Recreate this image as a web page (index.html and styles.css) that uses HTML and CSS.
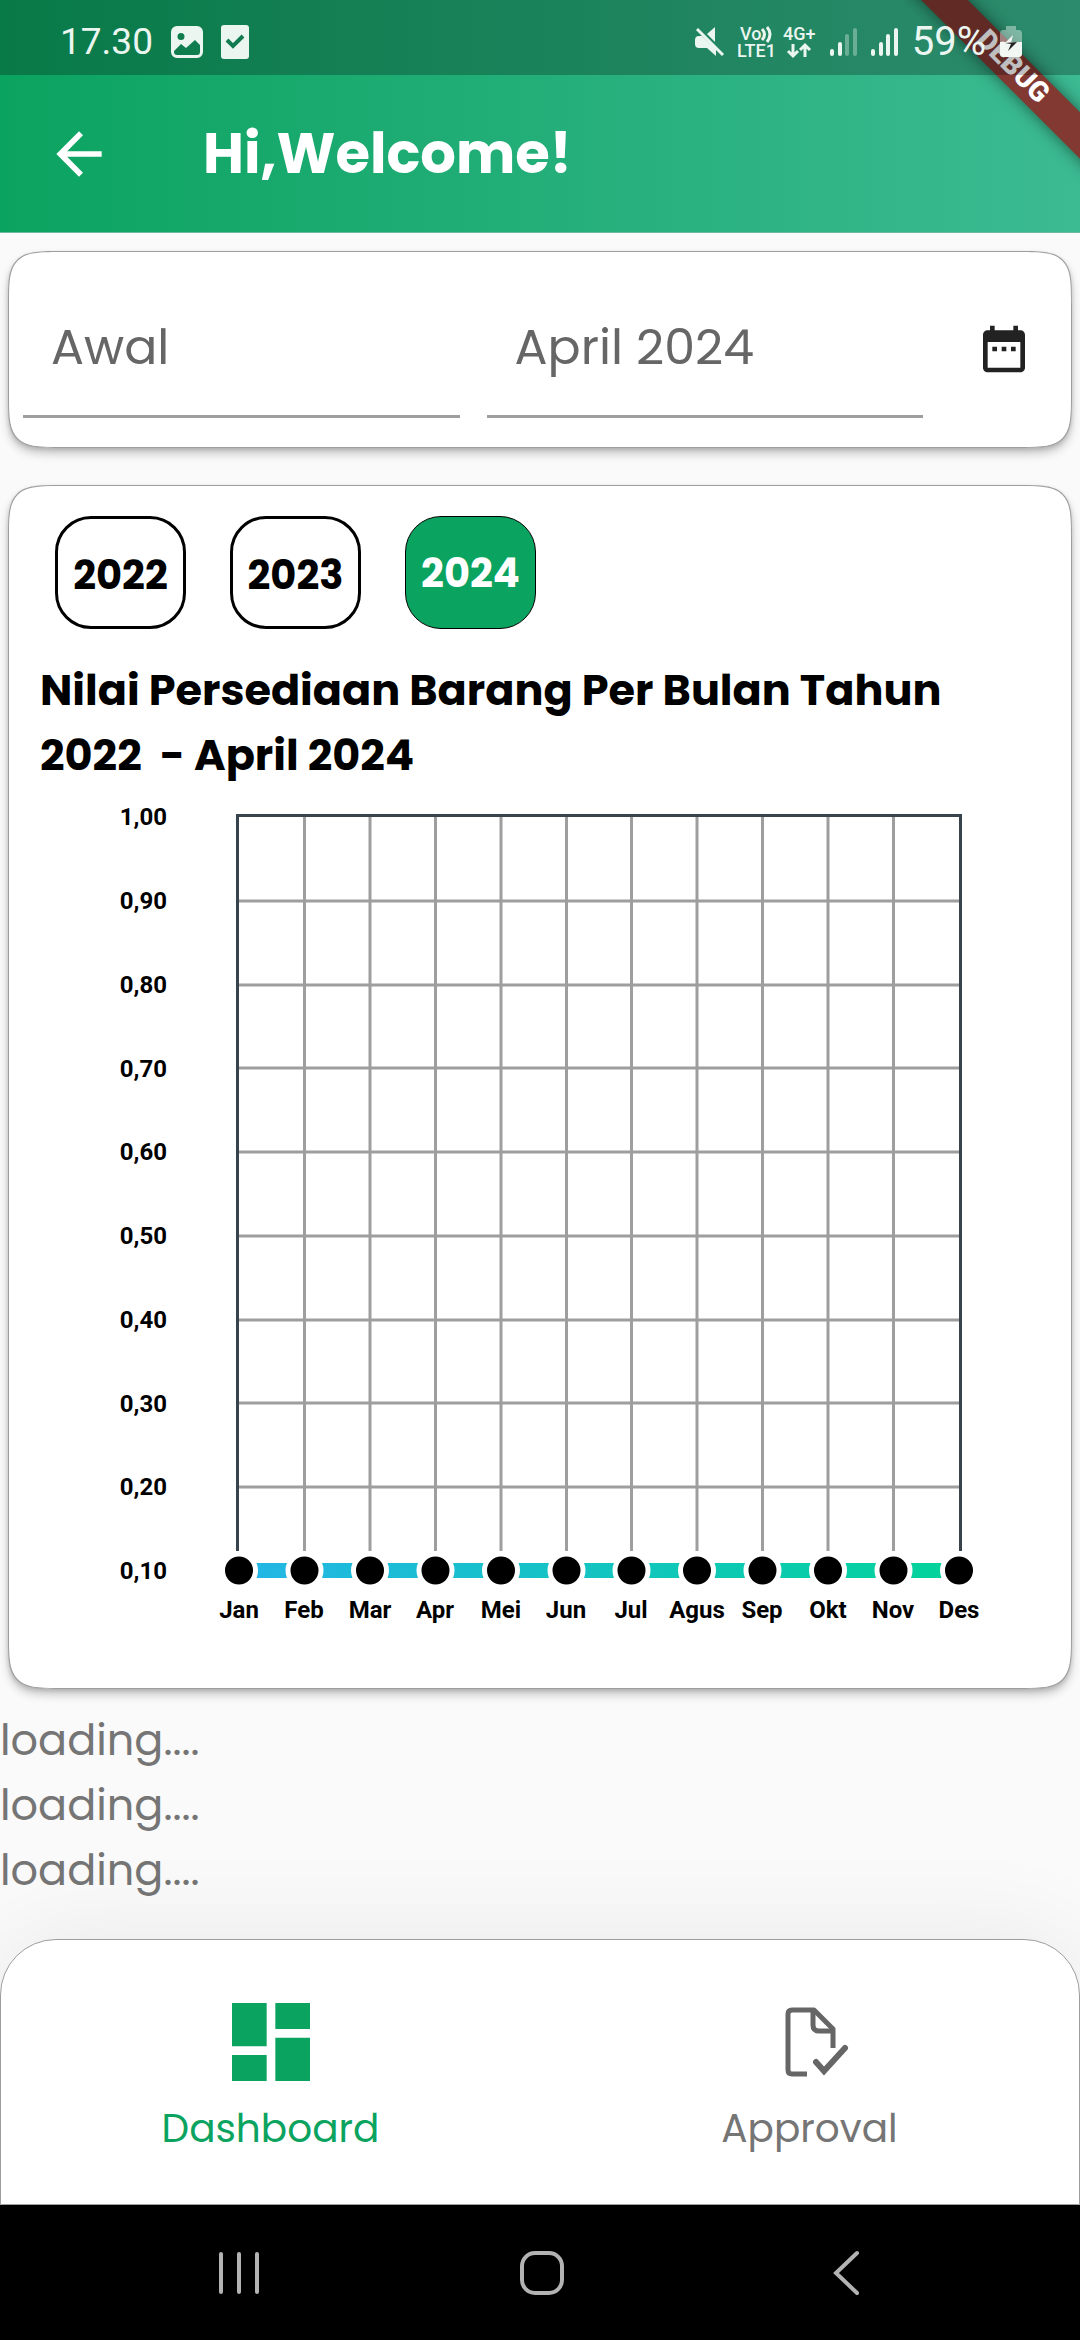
FILE: index.html
```html
<!DOCTYPE html>
<html lang="id">
<head>
<meta charset="utf-8">
<meta name="viewport" content="width=device-width, initial-scale=1">
<title>Dashboard</title>
<link rel="stylesheet" href="styles.css">
</head>
<body>
<div class="screen">
  <header class="top">
    <div class="status">
      <div class="status-group">
        <span class="clock clock-time">17.30</span>
        <svg class="status-image" width="32" height="32" viewBox="0 0 32 32" aria-hidden="true">
          <path fill="#ebf6f0" fill-rule="evenodd" d="M6 0h20a6 6 0 0 1 6 6v20a6 6 0 0 1-6 6H6a6 6 0 0 1-6-6V6a6 6 0 0 1 6-6zM10 7a3.5 3.5 0 1 0 0 7 3.500 3.500 0 1 0 0-7zM3 25v1a3 3 0 0 0 3 3h20a3 3 0 0 0 3-3v-7l-5-5-9 8-5-4z"/>
        </svg>
        <svg width="28" height="34" viewBox="0 0 28 34" aria-hidden="true">
          <rect width="28" height="34" rx="3" fill="#ebf6f0"/>
          <path d="M6 15l6 6 10-10" fill="none" stroke="#127c50" stroke-width="4"/>
        </svg>
      </div>
      <div class="status-group status-right">
        <svg width="122" height="36" viewBox="0 0 122 36" aria-hidden="true">
          <g fill="#ebf6f0">
            <path d="M21 3v15L13 10zM5 12h3l14 13v7l-9-8H5q-4 0-4-4v-4q0-4 4-4z"/>
            <path d="M3 5l26 26" stroke="#ebf6f0" stroke-width="3"/>
            <text x="46" y="16" class="net">Vo</text>
            <text x="43" y="33" class="net">LTE1</text>
            <text x="89" y="16" class="net">4G+</text>
          </g>
          <path d="M68 5q5 5 0 11M73 3q6 7 0 15M99 20v12m-5-5l5 5 5-5M111 33V21m-5 5l5-5 5 5" fill="none" stroke="#ebf6f0" stroke-width="3"/>
        </svg>
        <svg class="bars" width="68" height="30" viewBox="0 0 68 30" aria-hidden="true">
          <g stroke="#ebf6f0" stroke-width="4" stroke-linecap="round">
            <path d="M2 24v3M10 17v10M43 24v3M51 17v10M58 9v18M66 3v24"/>
            <path d="M17 9v18M25 3v24" opacity=".35"/>
          </g>
        </svg>
        <span class="clock">59%</span>
        <svg width="22" height="32" viewBox="0 0 22 32" aria-hidden="true">
          <path d="M6 0h10v4h3q3 0 3 4v8H0V8q0-4 3-4h3z" fill="#fff" opacity=".4"/>
          <path d="M0 16h22v12q0 3-3 3H3q-3 0-3-3z" fill="#f2f7f4"/>
          <path d="M13 9L5 17h6z" fill="#f2f7f4"/>
          <path d="M5 17l12-1-9 9 3-7z" fill="#222"/>
        </svg>
      </div>
    </div>
    <div class="appbar">
      <a class="back" href="#" aria-label="Kembali">
        <svg width="68" height="68" viewBox="0 0 24 24" aria-hidden="true"><path fill="#fff" d="M20 11H7.830l5.590-5.590L12 4l-8 8 8 8 1.410-1.410L7.830 13H20v-2z"/></svg>
      </a>
      <h1 class="heading">Hi,Welcome!</h1>
    </div>
    <div class="ribbon-clip"><div class="ribbon">DEBUG</div></div>
    <div class="status-shade"></div>
  </header>

  <main class="content">
    <form class="card filter">
      <input class="field" type="text" aria-label="Awal" value="Awal">
      <input class="field" type="text" aria-label="Akhir" value="April 2024">
      <button class="pick" type="button" aria-label="Pilih tanggal">
        <svg width="56" height="56" viewBox="0 0 24 24" aria-hidden="true"><path fill="#222" d="M9 11H7v2h2v-2zm4 0h-2v2h2v-2zm4 0h-2v2h2v-2zm2-7h-1V2h-2v2H8V2H6v2H5c-1.100 0-2 .9-2 2v14c0 1.100.9 2 2 2h14c1.100 0 2-.9 2-2V6c0-1.100-.9-2-2-2zm0 16H5V9h14v11z"/></svg>
      </button>
    </form>

    <section class="card report">
      <div class="years">
        <button class="year" type="button">2022</button>
        <button class="year" type="button">2023</button>
        <button class="year year-active" type="button">2024</button>
      </div>
      <h2 class="title">Nilai Persediaan Barang Per Bulan Tahun 2022  - April 2024</h2>
      <svg class="chart" viewBox="0 0 1000 840" role="img" aria-label="Nilai persediaan per bulan">
        <defs>
          <linearGradient id="series" gradientUnits="userSpaceOnUse" x1="199" y1="0" x2="919" y2="0">
            <stop offset="0" stop-color="#23b6e6"/><stop offset="1" stop-color="#02d39a"/>
          </linearGradient>
        </defs>
        <path class="grid" d="M199 101H919M199 185H919M199 268H919M199 352H919M199 436H919M199 520H919M199 603H919M199 687H919M264.500 16V751M330 16V751M395.500 16V751M461 16V751M526.500 16V751M591.500 16V751M657 16V751M722.500 16V751M788 16V751M853.500 16V751"/>
        <path class="frame" d="M197.500 751V15.500H920.500V751"/>
        <path d="M199 770.500H919" stroke="url(#series)" stroke-width="15"/>
        <g class="dots">
          <circle cx="199" cy="770.500" r="16.500"/><circle cx="264.500" cy="770.500" r="16.500"/><circle cx="330" cy="770.500" r="16.500"/><circle cx="395.500" cy="770.500" r="16.500"/><circle cx="461" cy="770.500" r="16.500"/><circle cx="526.500" cy="770.500" r="16.500"/><circle cx="591.500" cy="770.500" r="16.500"/><circle cx="657" cy="770.500" r="16.500"/><circle cx="722.500" cy="770.500" r="16.500"/><circle cx="788" cy="770.500" r="16.500"/><circle cx="853.500" cy="770.500" r="16.500"/><circle cx="919" cy="770.500" r="16.500"/>
        </g>
        <g class="tick tick-y">
          <text x="127" y="25">1,00</text><text x="127" y="109">0,90</text><text x="127" y="193">0,80</text><text x="127" y="277">0,70</text><text x="127" y="360">0,60</text><text x="127" y="444">0,50</text><text x="127" y="528">0,40</text><text x="127" y="612">0,30</text><text x="127" y="695">0,20</text><text x="127" y="779">0,10</text>
        </g>
        <g class="tick tick-x">
          <text x="199" y="818">Jan</text><text x="264" y="818">Feb</text><text x="330" y="818">Mar</text><text x="395" y="818">Apr</text><text x="461" y="818">Mei</text><text x="526" y="818">Jun</text><text x="591" y="818">Jul</text><text x="657" y="818">Agus</text><text x="722" y="818">Sep</text><text x="788" y="818">Okt</text><text x="853" y="818">Nov</text><text x="919" y="818">Des</text>
        </g>
      </svg>
    </section>

    <div class="loading">
      <p>loading....</p>
      <p>loading....</p>
      <p>loading....</p>
    </div>
  </main>

  <nav class="tabs">
    <a class="tab tab-active" href="#">
      <svg width="104" height="104" viewBox="0 0 24 24" aria-hidden="true"><path fill="currentColor" d="M3 13h8V3H3v10zm0 8h8v-6H3v6zm10 0h8V11h-8v10zm0-18v6h8V3h-8z"/></svg>
      <span>Dashboard</span>
    </a>
    <a class="tab" href="#">
      <svg width="104" height="104" viewBox="0 0 104 104" aria-hidden="true">
        <g fill="none" stroke="#666" stroke-width="5" stroke-linejoin="round">
          <path d="M49 84H34q-4 0-4-4V24q0-4 4-4h22l19 19v19"/>
          <path d="M55 20v15q0 6 6 6h14"/>
          <path d="M58 72l8 9 21-23" stroke-width="6" stroke-linecap="round" stroke-linejoin="miter"/>
        </g>
      </svg>
      <span>Approval</span>
    </a>
  </nav>

  <div class="system">
    <button class="key" type="button" aria-label="Terkini"><svg width="46" height="46" viewBox="0 0 46 46"><path d="M5 4v38M23 4v38M41 4v38"/></svg></button>
    <button class="key" type="button" aria-label="Beranda"><svg width="46" height="46" viewBox="0 0 46 46"><rect x="3" y="3" width="40" height="40" rx="13"/></svg></button>
    <button class="key" type="button" aria-label="Kembali"><svg width="46" height="46" viewBox="0 0 46 46"><path d="M35 3L14 23l21 20"/></svg></button>
  </div>
</div>
</body>
</html>
```
FILE: styles.css
```css
* { box-sizing: border-box; }

body {
  margin: 0;
  background: #fafafa;
  font-family: Poppins, Inter, sans-serif;
  font-feature-settings: "cv11";
}

h1, h2, p { margin: 0; }
button { padding: 0; border: 0; background: none; font: inherit; font-feature-settings: inherit; }
a { color: inherit; text-decoration: none; }
svg { display: block; }

.screen {
  display: flex;
  flex-direction: column;
  min-height: 100vh;
}

/* Header */
.top {
  position: relative;
  background: linear-gradient(90deg, #0ba360, #3cba92);
  border-bottom: 1px solid #6fb8a0;
}

.status {
  position: relative;
  z-index: 3;
  display: flex;
  justify-content: space-between;
  align-items: center;
  height: 75px;
  padding: 8px 58px 0 60px;
}

.status-shade {
  position: absolute;
  inset: 0 0 auto;
  height: 75px;
  background: rgba(0, 0, 0, 0.25);
}

.status-group { display: flex; align-items: center; gap: 18px; }
.status-right { gap: 14px; }

.clock {
  color: #ebf6f0;
  font-family: Roboto, sans-serif;
  font-size: 40px;
  line-height: 40px;
}

.clock-time { font-size: 37px; }

.net { font: 500 18px Roboto, sans-serif; }

.appbar {
  display: flex;
  align-items: center;
  height: 157px;
  padding-left: 45px;
  gap: 90px;
}

.heading {
  color: #fff;
  font-size: 56px;
  font-weight: 700;
  line-height: 84px;
}

.ribbon-clip {
  position: absolute;
  top: 0;
  right: 0;
  width: 240px;
  height: 231px;
  overflow: hidden;
}

.ribbon {
  position: absolute;
  top: 51px;
  right: -132px;
  width: 400px;
  height: 33px;
  background: #823932;
  box-shadow: 0 0 16px rgba(0, 0, 0, 0.5);
  color: #fff;
  font: 900 28px/29px Roboto, sans-serif;
  text-align: center;
  transform: rotate(45deg);
}

/* Cards */
.content {
  display: flex;
  flex: 1;
  flex-direction: column;
  padding-top: 18px;
}

.card {
  margin: 0 8px;
  border: 1px solid #9e9e9e;
  border-radius: 36px;
  background: #fff;
  box-shadow: 0 6px 10px rgba(0, 0, 0, 0.2), 0 2px 4px rgba(0, 0, 0, 0.14);
}

@supports (corner-shape: squircle) {
  .card { border-radius: 56px; corner-shape: squircle; }
}

.filter {
  display: grid;
  grid-template-columns: 1fr 1fr 108px;
  column-gap: 27px;
  padding: 0 13px 29px 14px;
}

.field {
  width: 100%;
  min-width: 0;
  height: 166px;
  padding: 56px 28px 28px;
  border: 0;
  border-bottom: 3px solid #9e9e9e;
  border-radius: 0;
  background: transparent;
  color: #666;
  font: inherit;
  font-feature-settings: inherit;
  font-size: 49px;
}

.pick {
  display: grid;
  place-items: center;
  padding-top: 28px;
}

.report {
  margin-top: 37px;
  padding: 30px 31px 48px;
}

.years { display: flex; gap: 44px; padding-left: 15px; }

.year {
  width: 131px;
  height: 113px;
  padding-top: 4px;
  border: 3px solid #000;
  border-radius: 36px;
  color: #000;
  font-size: 40px;
  font-weight: 700;
}

.year-active {
  padding-top: 0;
  border-width: 1px;
  background: #0ba360;
  color: #fff;
}

.title {
  margin: 29px 0 12px;
  color: #000;
  font-size: 43px;
  font-weight: 700;
  line-height: 65px;
  white-space: pre-wrap;
}

.chart { width: 100%; height: auto; }
.grid { fill: none; stroke: #9e9e9e; stroke-width: 3; }
.frame { fill: none; stroke: #37434d; stroke-width: 3; }
.dots { fill: #000; stroke: #fff; stroke-width: 5; }
.tick { font: 700 24px Roboto, sans-serif; fill: #000; }
.tick-y { text-anchor: end; }
.tick-x { text-anchor: middle; }

.loading {
  padding: 19px 0 35px;
  color: #757575;
  font-size: 43px;
  line-height: 65px;
}

/* Bottom tabs */
.tabs {
  display: grid;
  grid-template-columns: 1fr 1fr;
  height: 266px;
  border: 1px solid #9e9e9e;
  border-radius: 56px 56px 0 0;
  background: #fff;
  box-shadow: 0 0 100px rgba(0, 0, 0, 0.08);
}

.tab {
  display: flex;
  flex-direction: column;
  align-items: center;
  padding-top: 50px;
  gap: 5px;
  color: #757575;
  font-size: 39px;
  line-height: 60px;
}

.tab-active { color: #0ba360; }

/* System keys */
.system {
  position: relative;
  display: flex;
  justify-content: center;
  gap: 257px;
  height: 135px;
  padding-left: 4px;
  background: #000;
}

.key { display: grid; place-items: center; }
.key svg { fill: none; stroke: #b3b3b3; stroke-width: 4; stroke-linecap: round; }
```
